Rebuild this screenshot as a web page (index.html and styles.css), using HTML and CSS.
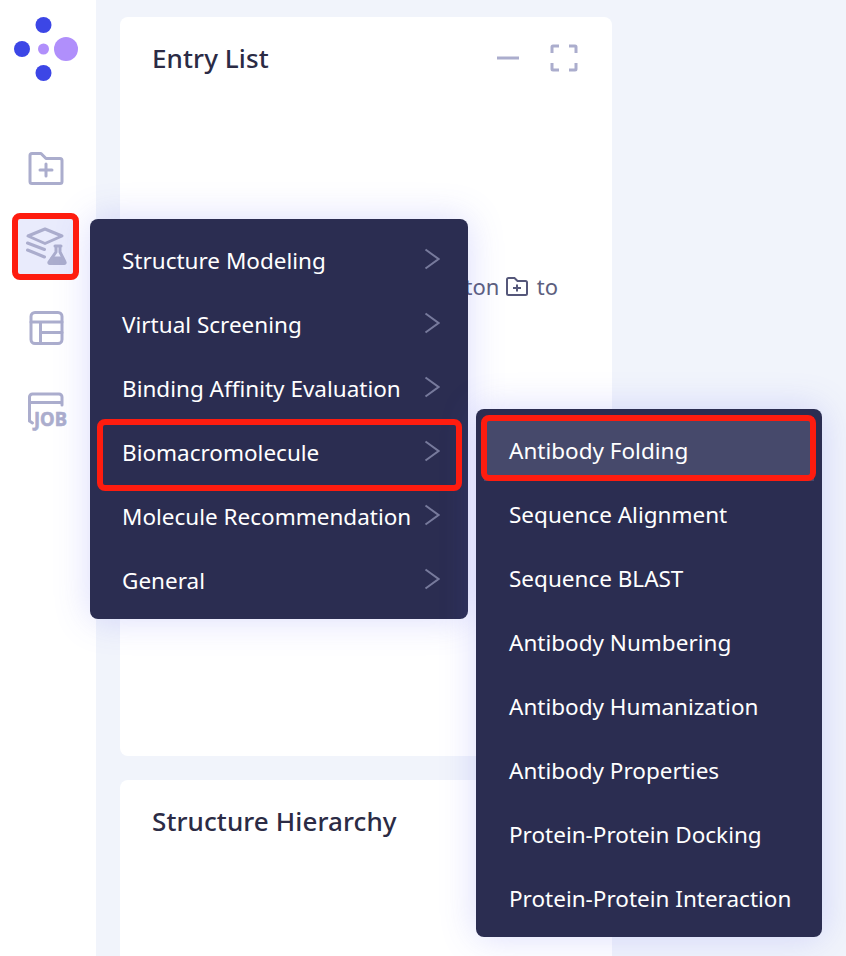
FILE: index.html
```html
<!DOCTYPE html>
<html lang="en">
<head>
    <meta charset="UTF-8">
    <meta name="viewport" content="width=device-width, initial-scale=1.0">
    <title>Entry List</title>
    <link rel="stylesheet" href="styles.css">
</head>
<body>
    <div class="app">
        <nav class="sidebar">
            <svg class="logo" width="64" height="64" viewBox="14 17 64 64">
                <circle cx="43.5" cy="25" r="8" fill="#3c46e6"/>
                <circle cx="22" cy="49" r="8" fill="#3c46e6"/>
                <circle cx="43.5" cy="73" r="8" fill="#3c46e6"/>
                <circle cx="43.5" cy="49" r="5.5" fill="#b08ffb"/>
                <circle cx="66" cy="49" r="12" fill="#b08ffb"/>
            </svg>
            <div class="nav-items">
                <div class="nav-item">
                    <svg width="64" height="64" viewBox="14 136 64 64" class="nav-icon">
                        <path d="M32 153.500h9l5 5h14a2 2 0 0 1 2 2v21a2 2 0 0 1-2 2H32a2 2 0 0 1-2-2v-26a2 2 0 0 1 2-2z"/>
                        <path d="M40 170h12M46 164v12"/>
                    </svg>
                </div>
                <div class="nav-item active">
                    <svg width="64" height="64" viewBox="14 216 64 64" class="nav-icon">
                        <path d="M45 229l17 7-17 7.500-17-7.500z"/>
                        <path d="M27.500 243l17 6.500M27.500 250l17 7"/>
                        <path d="M55 246h6M56 246v6l-7 10a1 1 0 0 0 1 1.500h14a1 1 0 0 0 1-1.500l-5-10v-6"/>
                        <path d="M52 258h10M50.500 261h13"/>
                    </svg>
                </div>
                <div class="nav-item">
                    <svg width="64" height="64" viewBox="14 296 64 64" class="nav-icon">
                        <rect x="31" y="312.500" width="31" height="31" rx="4"/>
                        <path d="M31 322h31M40.500 322v21.500M40.500 332.500H62"/>
                    </svg>
                </div>
                <div class="nav-item">
                    <svg width="64" height="64" viewBox="14 376 64 64" class="nav-icon">
                        <path d="M29.500 421v-24a3 3 0 0 1 3-3h26.500a3 3 0 0 1 3 3v8M29.500 402.500h32.500M29.500 421l3 2"/>
                        <text x="34" y="426" class="job-text" textLength="33" lengthAdjust="spacingAndGlyphs">JOB</text>
                    </svg>
                </div>
            </div>
        </nav>

        <main class="content">
            <section class="card card-entry">
                <div class="card-header">
                    <h2>Entry List</h2>
                    <div class="card-tools">
                        <svg width="24" height="28" viewBox="0 0 24 28" class="tool-icon"><path d="M1 14h22"/></svg>
                        <svg width="30" height="28" viewBox="0 0 30 28" class="tool-icon"><path d="M3 9V3a1 1 0 0 1 1-1h6M20 2h6a1 1 0 0 1 1 1v6M27 19v6a1 1 0 0 1-1 1h-6M10 26H4a1 1 0 0 1-1-1v-6"/></svg>
                    </div>
                </div>
                <p class="empty-hint">
                    Please use the upper left button
                    <svg width="24" height="24" viewBox="0 0 24 24" class="hint-icon">
                        <path d="M3.500 3h6l3 3h8a1.500 1.500 0 0 1 1.500 1.500v11a1.500 1.500 0 0 1-1.500 1.500h-17A1.500 1.500 0 0 1 2 18.500v-14A1.500 1.500 0 0 1 3.500 3z"/>
                        <path d="M8 13h8M12 9.500v7"/>
                    </svg>
                    to
                </p>
            </section>
            <section class="card card-hierarchy">
                <div class="card-header">
                    <h2>Structure Hierarchy</h2>
                </div>
            </section>
        </main>

        <ul class="menu menu-main">
            <li class="menu-item">Structure Modeling<svg width="16" height="22" viewBox="0 0 16 22" class="chevron"><path d="M1.500 1.500l13 9.500-13 9.500"/></svg></li>
            <li class="menu-item">Virtual Screening<svg width="16" height="22" viewBox="0 0 16 22" class="chevron"><path d="M1.500 1.500l13 9.500-13 9.500"/></svg></li>
            <li class="menu-item">Binding Affinity Evaluation<svg width="16" height="22" viewBox="0 0 16 22" class="chevron"><path d="M1.500 1.500l13 9.500-13 9.500"/></svg></li>
            <li class="menu-item">Biomacromolecule<svg width="16" height="22" viewBox="0 0 16 22" class="chevron"><path d="M1.500 1.500l13 9.500-13 9.500"/></svg></li>
            <li class="menu-item">Molecule Recommendation<svg width="16" height="22" viewBox="0 0 16 22" class="chevron"><path d="M1.500 1.500l13 9.500-13 9.500"/></svg></li>
            <li class="menu-item">General<svg width="16" height="22" viewBox="0 0 16 22" class="chevron"><path d="M1.500 1.500l13 9.500-13 9.500"/></svg></li>
        </ul>

        <ul class="menu menu-sub">
            <li class="menu-item selected">Antibody Folding</li>
            <li class="menu-item">Sequence Alignment</li>
            <li class="menu-item">Sequence BLAST</li>
            <li class="menu-item">Antibody Numbering</li>
            <li class="menu-item">Antibody Humanization</li>
            <li class="menu-item">Antibody Properties</li>
            <li class="menu-item">Protein-Protein Docking</li>
            <li class="menu-item">Protein-Protein Interaction</li>
        </ul>

        <div class="callout callout-nav"></div>
        <div class="callout callout-menu"></div>
        <div class="callout callout-sub"></div>
    </div>
</body>
</html>
```

FILE: styles.css
```css
* {
    box-sizing: border-box;
}
html, body {
    margin: 0;
    padding: 0;
}
body {
    font-family: "Noto Sans", Arial, sans-serif;
    background-color: #f1f4fb;
    color: #2b2b45;
}
.app {
    position: relative;
    display: flex;
    width: 846px;
    height: 956px;
    overflow: hidden;
}
.sidebar {
    width: 96px;
    flex-shrink: 0;
    padding: 17px 14px 0;
    background-color: white;
}
.logo {
    display: block;
}
.nav-items {
    display: flex;
    flex-direction: column;
    gap: 16px;
    margin-top: 55px;
}
.nav-item {
    width: 64px;
    height: 64px;
    border-radius: 6px;
}
.nav-item.active {
    background-color: #e9ebfc;
}
.nav-icon {
    display: block;
    fill: none;
    stroke: #abadcd;
    stroke-width: 3;
    stroke-linecap: round;
    stroke-linejoin: round;
}
.job-text {
    font-family: "Noto Sans", sans-serif;
    font-size: 20px;
    font-weight: 700;
    fill: #abadcd;
    stroke: #abadcd;
    stroke-width: 0.6;
}
.content {
    flex: 1;
    display: flex;
    flex-direction: column;
    gap: 24px;
    padding: 17px 0 0 24px;
}
.card {
    width: 492px;
    flex-shrink: 0;
    background-color: white;
    border-radius: 8px;
}
.card-entry {
    height: 739px;
}
.card-hierarchy {
    height: 300px;
}
.card-header {
    display: flex;
    justify-content: space-between;
    align-items: center;
    height: 82px;
    padding: 0 33px 0 32px;
}
.card-header h2 {
    margin: 0;
    font-size: 26px;
    font-weight: 500;
    letter-spacing: 0.1px;
    color: #2b2b45;
}
.card-tools {
    display: flex;
    align-items: center;
    gap: 29px;
}
.tool-icon {
    display: block;
    fill: none;
    stroke: #abadcd;
    stroke-width: 3;
}
.empty-hint {
    margin: 0;
    padding: 172px 6px 0 0;
    text-align: center;
    font-size: 22px;
    white-space: nowrap;
    color: #5d5f7e;
}
.hint-icon {
    margin-right: 2px;
    vertical-align: -4px;
    fill: none;
    stroke: #55577a;
    stroke-width: 2;
}
.menu {
    position: absolute;
    margin: 0;
    padding: 8px;
    list-style: none;
    background-color: #2b2d51;
    border-radius: 8px;
    box-shadow: 0 0 36px rgba(88, 92, 240, 0.22);
}
.menu-main {
    left: 90px;
    top: 219px;
    width: 378px;
}
.menu-sub {
    left: 476px;
    top: 409px;
    width: 346px;
}
.menu-item {
    display: flex;
    justify-content: space-between;
    align-items: center;
    height: 64px;
    padding: 2px 20px 0 24px;
    font-size: 22.5px;
    color: white;
    white-space: nowrap;
}
.menu-sub .menu-item {
    padding-left: 25px;
}
.menu-item.selected {
    background-color: #46496b;
}
.chevron {
    margin-top: -2px;
    fill: none;
    stroke: #777a9c;
    stroke-width: 2;
}
.callout {
    position: absolute;
    border: 6px solid #fe1c0f;
    border-radius: 8px;
}
.callout-nav {
    left: 12px;
    top: 213px;
    width: 67px;
    height: 67px;
}
.callout-menu {
    left: 97px;
    top: 419px;
    width: 365px;
    height: 72px;
}
.callout-sub {
    left: 481px;
    top: 415px;
    width: 335px;
    height: 66px;
}
```
